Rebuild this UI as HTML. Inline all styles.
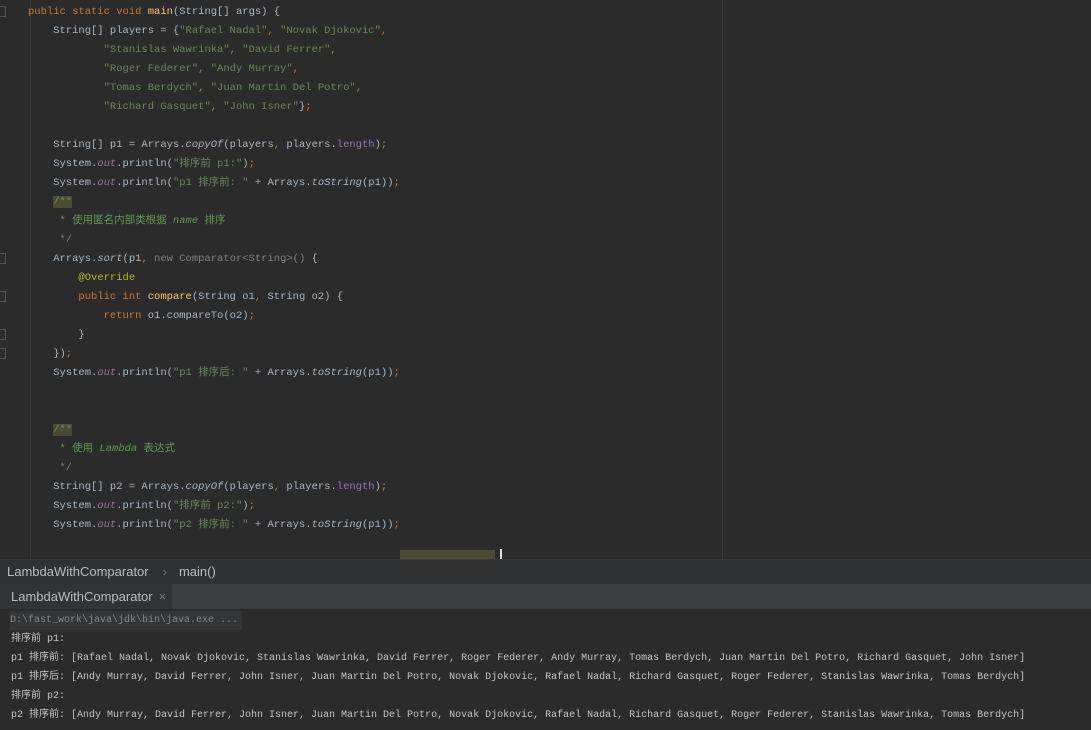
<!DOCTYPE html>
<html><head><meta charset="utf-8"><style>
body{margin:0;width:1091px;height:730px;background:#2b2b2b;overflow:hidden;position:relative;font-family:"Liberation Mono","Noto Sans CJK SC",monospace;}
#ed{position:absolute;left:0;top:0;width:1091px;height:559px;background:#2b2b2b;overflow:hidden}
.gl{position:absolute;left:30px;top:0;width:1px;height:559px;background:#393939}
.rm{position:absolute;left:722px;top:0;width:1px;height:559px;background:#3a3a3a}
.ln{position:absolute;left:28px;height:19px;line-height:19px;font-size:10.5px;color:#a9b7c6;white-space:pre;margin-top:3px}
.k{color:#cc7832}.s{color:#6a8759}.f{color:#ffc66d}.p{color:#9876aa}.i{font-style:italic}.c{color:#629755}.a{color:#bbb529}.g{color:#808080}
.fo{position:absolute;left:0;width:5px;height:9px;border:1px solid #555;border-left:none}
#bc{position:absolute;left:0;top:559px;width:1091px;height:24px;background:#2f3133;border-top:1px solid #3a3a3a;font-family:"Liberation Sans",sans-serif;font-size:13px;color:#bbb;line-height:24px}
#tb{position:absolute;left:0;top:584px;width:1091px;height:25px;background:#3c3f41;font-family:"Liberation Sans",sans-serif;font-size:13px;color:#bbb;line-height:25px}
#con{position:absolute;left:0;top:609px;width:1091px;height:121px;background:#2b2b2b}
.cl{position:absolute;left:11px;font-size:10px;color:#c4c4c4;white-space:pre;height:19px;line-height:19px}
</style></head><body>
<div id="ed">
<div class="gl"></div><div class="rm"></div>
<div class="fo" style="top:6px"></div><div class="fo" style="top:253px"></div><div class="fo" style="top:291px"></div><div class="fo" style="top:329px"></div><div class="fo" style="top:348px"></div>
<div class="ln" style="top:0"><span class="k">public static void </span><span class="f">main</span>(String[] args) {</div>
<div class="ln" style="top:19px">    String[] players = {<span class="s">"Rafael Nadal"</span><span class="k">, </span><span class="s">"Novak Djokovic"</span><span class="k">,</span></div>
<div class="ln" style="top:38px">            <span class="s">"Stanislas Wawrinka"</span><span class="k">, </span><span class="s">"David Ferrer"</span><span class="k">,</span></div>
<div class="ln" style="top:57px">            <span class="s">"Roger Federer"</span><span class="k">, </span><span class="s">"Andy Murray"</span><span class="k">,</span></div>
<div class="ln" style="top:76px">            <span class="s">"Tomas Berdych"</span><span class="k">, </span><span class="s">"Juan Martin Del Potro"</span><span class="k">,</span></div>
<div class="ln" style="top:95px">            <span class="s">"Richard Gasquet"</span><span class="k">, </span><span class="s">"John Isner"</span>}<span class="k">;</span></div>
<div class="ln" style="top:133px">    String[] p1 = Arrays.<span class="i">copyOf</span>(players<span class="k">, </span>players.<span class="p">length</span>)<span class="k">;</span></div>
<div class="ln" style="top:152px">    System.<span class="p i">out</span>.println(<span class="s">"排序前 p1:"</span>)<span class="k">;</span></div>
<div class="ln" style="top:171px">    System.<span class="p i">out</span>.println(<span class="s">"p1 排序前: "</span> + Arrays.<span class="i">toString</span>(p1))<span class="k">;</span></div>
<div class="ln c" style="top:190px">    <span style="background:#4b4a35">/**</span></div>
<div class="ln c" style="top:209px">     * 使用匿名内部类根据 <i>name</i> 排序</div>
<div class="ln c" style="top:228px">     */</div>
<div class="ln" style="top:247px">    Arrays.<span class="i">sort</span>(p1<span class="k">, </span><span class="g">new Comparator&lt;String&gt;()</span> {</div>
<div class="ln" style="top:266px">        <span class="a">@Override</span></div>
<div class="ln" style="top:285px">        <span class="k">public int </span><span class="f">compare</span>(String o1<span class="k">, </span>String o2) {</div>
<div class="ln" style="top:304px">            <span class="k">return </span>o1.compareTo(o2)<span class="k">;</span></div>
<div class="ln" style="top:323px">        }</div>
<div class="ln" style="top:342px">    })<span class="k">;</span></div>
<div class="ln" style="top:361px">    System.<span class="p i">out</span>.println(<span class="s">"p1 排序后: "</span> + Arrays.<span class="i">toString</span>(p1))<span class="k">;</span></div>
<div class="ln c" style="top:418px">    <span style="background:#4b4a35">/**</span></div>
<div class="ln c" style="top:437px">     * 使用 <i>Lambda</i> 表达式</div>
<div class="ln c" style="top:456px">     */</div>
<div class="ln" style="top:475px">    String[] p2 = Arrays.<span class="i">copyOf</span>(players<span class="k">, </span>players.<span class="p">length</span>)<span class="k">;</span></div>
<div class="ln" style="top:494px">    System.<span class="p i">out</span>.println(<span class="s">"排序前 p2:"</span>)<span class="k">;</span></div>
<div class="ln" style="top:513px">    System.<span class="p i">out</span>.println(<span class="s">"p2 排序前: "</span> + Arrays.<span class="i">toString</span>(p1))<span class="k">;</span></div>
<div style="position:absolute;left:400px;top:550px;width:95px;height:9px;background:#4b4a35"></div>
<div style="position:absolute;left:500px;top:549px;width:2px;height:10px;background:#ddd"></div>
</div>
<div id="bc"><span style="margin-left:7px">LambdaWithComparator</span><span style="margin-left:14px;color:#777">›</span><span style="margin-left:12px">main()</span></div>
<div id="tb"><div style="position:absolute;left:0;top:0;width:172px;height:25px;background:#313335"><span style="margin-left:11px">LambdaWithComparator</span><span style="margin-left:6px;color:#777">×</span></div></div>
<div id="con">
<div class="cl" style="top:2px;left:10px;background:#333537;color:#888;padding-right:4px">D:\fast_work\java\jdk\bin\java.exe ...</div>
<div class="cl" style="top:21px">排序前 p1:</div>
<div class="cl" style="top:40px">p1 排序前: [Rafael Nadal, Novak Djokovic, Stanislas Wawrinka, David Ferrer, Roger Federer, Andy Murray, Tomas Berdych, Juan Martin Del Potro, Richard Gasquet, John Isner]</div>
<div class="cl" style="top:59px">p1 排序后: [Andy Murray, David Ferrer, John Isner, Juan Martin Del Potro, Novak Djokovic, Rafael Nadal, Richard Gasquet, Roger Federer, Stanislas Wawrinka, Tomas Berdych]</div>
<div class="cl" style="top:78px">排序前 p2:</div>
<div class="cl" style="top:97px">p2 排序前: [Andy Murray, David Ferrer, John Isner, Juan Martin Del Potro, Novak Djokovic, Rafael Nadal, Richard Gasquet, Roger Federer, Stanislas Wawrinka, Tomas Berdych]</div>
</div>
</body></html>
